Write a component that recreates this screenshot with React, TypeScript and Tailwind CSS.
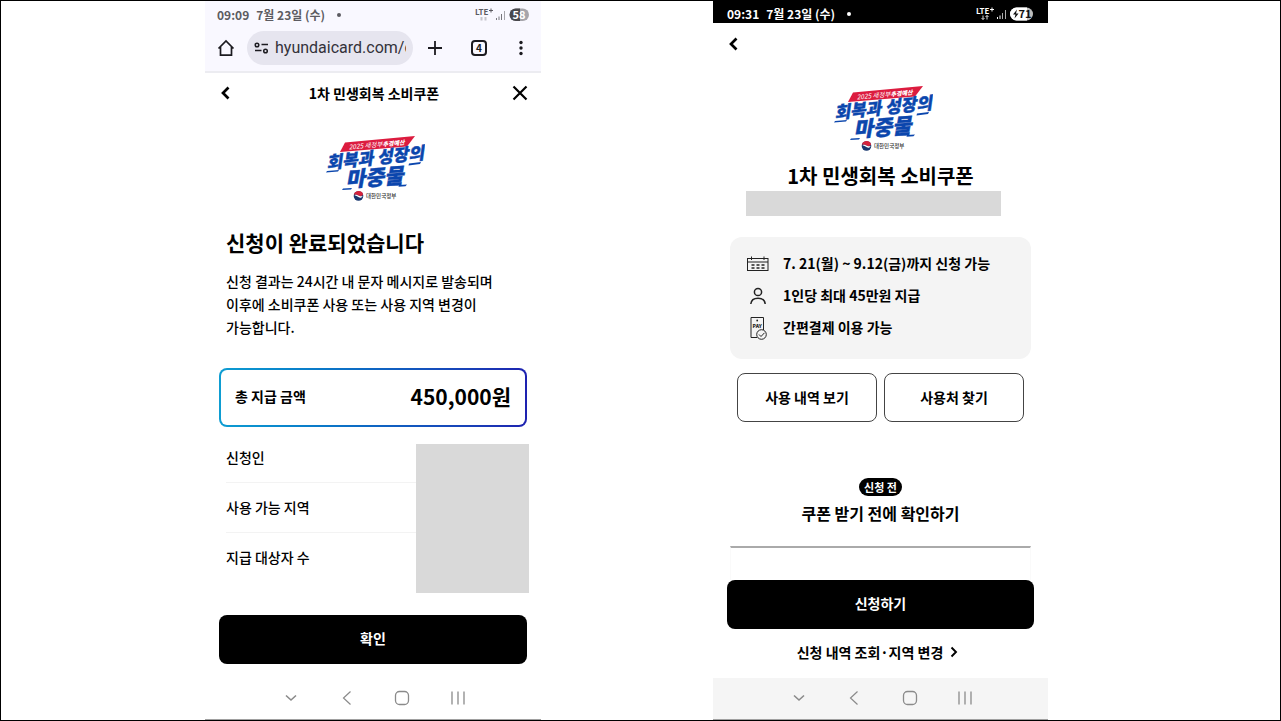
import clsx from "clsx";

type StatusBarProps = {
  time: string;
  date: string;
  level: string;
  dark?: boolean;
};

const StatusBar: React.FC<StatusBarProps> = ({ time, date, level, dark }) => {
  return (
    <div
      className={clsx(
        "flex items-center justify-between text-xs leading-4 font-bold",
        dark
          ? "bg-black pt-[5px] pb-px pl-[14px] pr-[14px] text-white"
          : "bg-[#f9f8ff] pt-[6px] pb-[6px] pl-3 pr-3 text-[#5c5b61]"
      )}
    >
      <div className="flex items-center">
        <span>{time}</span>
        <span className="ml-[7px]">{date}</span>
        <span
          className={clsx(
            "ml-3 size-1 rounded-full",
            dark ? "bg-white" : "bg-[#5c5b61]"
          )}
        />
      </div>
      {dark ? (
        <svg width="58" height="16" viewBox="0 0 58 16" aria-label={level}>
          <text x="0" y="8" fontSize="8" fontWeight="700" fill="#fff">
            LTE
          </text>
          <path d="M14 3.500h4M16 1.500v4" stroke="#fff" />
          <path d="M7 9.500v4M5.500 12l1.500 1.500L8.500 12M11 13.500v-4M9.500 11L11 9.500l1.500 1.500" fill="none" stroke="#ddd" />
          <path d="M21.500 13v-2M24 13V9.500" stroke="#fff" />
          <path d="M26.500 13V7M29.500 13V4" stroke="#aaa" />
          <rect x="34" y="1.500" width="23" height="13" rx="6.500" fill="#bdbdbd" />
          <path d="M40.500 1.500H51v13H40.500a6.500 6.500 0 0 1 0-13z" fill="#fff" />
          <path d="M41 3.500l-4 5h2.500l-1 4 4-5H40z" fill="#111" />
          <text x="42.500" y="12" fontSize="11" fontWeight="700" fill="#111">
            {level}
          </text>
        </svg>
      ) : (
        <svg width="54" height="16" viewBox="0 0 54 16" aria-label={level}>
          <text x="0" y="8" fontSize="8" fontWeight="700" fill="#5c5b61">
            LTE
          </text>
          <path d="M14 3.500h4M16 1.500v4" stroke="#5c5b61" />
          <path d="M6.500 10v3.500M10.500 10v3.500" stroke="#c5c4cc" strokeWidth="2" />
          <path d="M21.500 13v-2M24 13V9.500M26.500 13V7" stroke="#77767c" />
          <path d="M29.500 13V4" stroke="#a5a4aa" />
          <rect x="34.500" y="1.500" width="19.500" height="12.500" rx="6.250" fill="#a6a5ab" />
          <path d="M45 1.500v12.500h-4.250a6.250 6.250 0 0 1 0-12.500z" fill="#48474c" />
          <text x="37.500" y="12" fontSize="11" fontWeight="700" fill="#fff">
            {level}
          </text>
        </svg>
      )}
    </div>
  );
};

const CampaignLogo: React.FC = () => {
  return (
    <svg
      className="mx-auto block"
      width="104"
      height="70"
      viewBox="0 0 104 70"
      role="img"
      aria-label="2025 새정부 추경예산 회복과 성장의 마중물"
    >
      <path d="M24 9.500L94 3l-8 10.500-67 5.500z" fill="#dc1c3f" />
      <g transform="rotate(-5 28 17)" fill="#fff" fontStyle="italic">
        <text x="28" y="16.500" fontSize="6.500">
          2025 새정부
        </text>
        <text x="62" y="16.500" fontSize="6" fontWeight="900">
          추경예산
        </text>
      </g>
      <g fill="#0b46ad" stroke="#0b46ad" strokeWidth="0.400" fontStyle="italic" fontWeight="900">
        <text x="6" y="36" fontSize="17" transform="rotate(-6 6 36)">
          회복과 성장의
        </text>
        <text x="25" y="54" fontSize="21" transform="rotate(-4 25 54)">
          마중물
        </text>
      </g>
      <path d="M6 38l12-1-1 1.500-12 1zM88 30.500l12-1.500-1 2-11.500 1.500zM22 55.500l9-.6-1 1.600-9 .6zM78 52l8-.6-1.500 1.800-7 .5z" fill="#0b46ad" />
      <circle cx="37.500" cy="63" r="4.800" fill="#17366e" />
      <path d="M32.800 62a4.800 4.800 0 0 1 9.300-.8c-1.200 2.400-3.600 2.200-4.600 1.400-1.500-1.200-3.700-1.300-4.700-.6z" fill="#d5233c" />
      <path d="M33.500 62.200c1.300-.8 2.800-.5 3.800.3 1.300 1 3 1 4.300.2-.5 2-2.300 2.500-3.800 1.600-1.500-1-3-1.700-4.300-2.100z" fill="#fff" />
      <text x="45" y="65" fontSize="5.500" fontWeight="500" fill="#333">
        대한민국정부
      </text>
    </svg>
  );
};

const BackIcon: React.FC = () => (
  <svg width="10" height="14" viewBox="0 0 10 14" fill="none">
    <path d="M8.500 1.500L3 7l5.500 5.500" stroke="#000" strokeWidth="2.700" />
  </svg>
);

const SystemNav: React.FC<{ className?: string }> = ({ className }) => {
  return (
    <nav
      className={clsx(
        "mt-auto flex h-[42px] items-center justify-between border-b border-[#a0a0a0] pb-px pl-[76px] pr-[73px]",
        className
      )}
    >
      <button type="button" aria-label="키보드 닫기">
        <svg width="20" height="20" viewBox="0 0 20 20" fill="none" stroke="#8a8a8a" strokeWidth="1.600">
          <path d="M5 7.500l5 4.500 5-4.500" />
        </svg>
      </button>
      <button type="button" aria-label="뒤로">
        <svg width="20" height="20" viewBox="0 0 20 20" fill="none" stroke="#8a8a8a" strokeWidth="1.200">
          <path d="M13.500 3.500L6.500 10l7 6.500" />
        </svg>
      </button>
      <button type="button" aria-label="홈">
        <svg width="20" height="20" viewBox="0 0 20 20" fill="none" stroke="#8a8a8a" strokeWidth="1.300">
          <rect x="3.500" y="3.500" width="13" height="13" rx="4" />
        </svg>
      </button>
      <button type="button" aria-label="최근 앱">
        <svg width="20" height="20" viewBox="0 0 20 20" fill="none" stroke="#8a8a8a" strokeWidth="1.300">
          <path d="M4 3.500v13M10 3.500v13M16 3.500v13" />
        </svg>
      </button>
    </nav>
  );
};

const BrowserToolbar: React.FC = () => {
  return (
    <div className="flex items-center border-b-2 border-[#ececf1] bg-[#f9f8ff] pt-[2px] pb-[6px] text-[#1c1b20]">
      <button type="button" aria-label="홈페이지" className="flex w-[42px] justify-center">
        <svg width="18" height="18" viewBox="0 0 18 18" fill="none" stroke="currentColor" strokeWidth="1.700">
          <path d="M1.500 9.500L9 2l7.500 7.500M3.500 8v8.200h11V8" />
        </svg>
      </button>
      <label className="flex h-[34px] min-w-0 flex-1 items-center gap-[6px] rounded-full bg-[#e6e5ef] pr-[7px] pl-[7px]">
        <svg className="shrink-0" width="15" height="14" viewBox="0 0 15 14" fill="none" stroke="currentColor" strokeWidth="1.500">
          <circle cx="3" cy="4" r="1.800" />
          <path d="M7.500 3.500H14M1 9.500h6.500" />
          <circle cx="11.500" cy="10" r="1.800" />
        </svg>
        <input
          type="text"
          readOnly
          aria-label="주소"
          value="hyundaicard.com/c"
          className="w-full min-w-0 bg-transparent font-[Roboto,'Noto_Sans_CJK_KR',sans-serif] text-base leading-6 text-[#33323a] outline-none"
        />
      </label>
      <button type="button" aria-label="새 탭" className="flex w-11 justify-center">
        <svg width="16" height="16" viewBox="0 0 16 16" stroke="currentColor" strokeWidth="1.800">
          <path d="M8 1v14M1 8h14" />
        </svg>
      </button>
      <button type="button" aria-label="탭 목록" className="flex w-11 justify-center">
        <span className="flex size-4 items-center justify-center rounded-[4px] border-2 border-[#1c1b20] text-[10px] leading-3 font-bold">
          4
        </span>
      </button>
      <button type="button" aria-label="더보기" className="flex w-10 justify-center">
        <svg width="4" height="16" viewBox="0 0 4 16" fill="currentColor">
          <circle cx="2" cy="2.500" r="1.700" />
          <circle cx="2" cy="8" r="1.700" />
          <circle cx="2" cy="13.500" r="1.700" />
        </svg>
      </button>
    </div>
  );
};

const resultRows = ["신청인", "사용 가능 지역", "지급 대상자 수"];

const CompletePhone: React.FC = () => {
  return (
    <section className="col-start-2 flex min-w-0 flex-col">
      <StatusBar time="09:09" date="7월 23일 (수)" level="58" />
      <BrowserToolbar />

      <header className="flex h-10 items-center justify-between pr-[13px] pl-[15px]">
        <button type="button" aria-label="이전" className="w-4">
          <BackIcon />
        </button>
        <h2 className="pb-px text-sm font-bold">1차 민생회복 소비쿠폰</h2>
        <button type="button" aria-label="닫기">
          <svg width="16" height="16" viewBox="0 0 16 16" stroke="#000" strokeWidth="2.200">
            <path d="M1.500 1.500l13 13M14.500 1.500l-13 13" />
          </svg>
        </button>
      </header>

      <div className="pt-5">
        <CampaignLogo />
      </div>

      <div className="px-[21px] pt-6">
        <h1 className="text-[21px] leading-[30px] font-bold">신청이 완료되었습니다</h1>
        <p className="mt-[13px] text-sm leading-[23px] font-medium">
          신청 결과는 24시간 내 문자 메시지로 발송되며
          <br />
          이후에 소비쿠폰 사용 또는 사용 지역 변경이
          <br />
          가능합니다.
        </p>
      </div>

      <div className="mx-[14px] mt-[29px] rounded-lg bg-linear-to-r from-[#0e9dd2] to-[#1e22b0] p-[2px]">
        <div className="flex h-[55px] items-center justify-between rounded-md bg-white px-[14px] pb-1">
          <span className="text-sm font-bold">총 지급 금액</span>
          <strong className="text-[21px] leading-[30px] font-bold">450,000원</strong>
        </div>
      </div>

      <div className="mt-[6px] flex items-start pr-3 pl-[21px]">
        <ul className="flex-1 divide-y divide-[#f3f3f3] text-sm font-medium">
          {resultRows.map((row) => (
            <li key={row} className="flex h-[50px] items-center pb-[2px]">
              {row}
            </li>
          ))}
        </ul>
        <div className="mt-[11px] h-[149px] w-[113px] bg-[#d9d9d9]" />
      </div>

      <button
        type="button"
        className="mx-[14px] mt-[22px] h-[49px] rounded-lg bg-black pb-[3px] text-sm font-bold text-white"
      >
        확인
      </button>

      <SystemNav />
    </section>
  );
};

const CalendarIcon: React.FC = () => (
  <svg width="22" height="16" viewBox="0 0 22 16" fill="none" stroke="#222">
    <rect x="0.500" y="2.500" width="20.500" height="12" />
    <path d="M0.500 6H21M4.500 0.500v3.500M17 0.500v3.500" />
    <path d="M4.500 9h13M4.500 12h13" strokeWidth="1.400" strokeDasharray="3 2" />
  </svg>
);

const PersonIcon: React.FC = () => (
  <svg width="18" height="18" viewBox="0 0 18 18" fill="none" stroke="#222" strokeWidth="1.500">
    <circle cx="9" cy="5" r="3.600" />
    <path d="M1.800 17c.4-4 3.200-5.800 7.200-5.800s6.800 1.800 7.200 5.800" />
  </svg>
);

const PayIcon: React.FC = () => (
  <svg width="18" height="24" viewBox="0 0 18 24" fill="none" stroke="#222">
    <path d="M8 21.500H2V1.500h12.500V14" />
    <circle cx="8.200" cy="4.500" r="0.900" fill="#222" stroke="none" />
    <text x="3.500" y="12" fontSize="5" fontWeight="900" fill="#222" stroke="none">
      PAY
    </text>
    <circle cx="12.500" cy="18.500" r="4.800" fill="#f4f4f4" />
    <path d="M10 18.500l2 2 3.500-3.700" />
  </svg>
);

const couponInfo = [
  { icon: <CalendarIcon />, text: "7. 21(월) ~ 9.12(금)까지 신청 가능" },
  { icon: <PersonIcon />, text: "1인당 최대 45만원 지급" },
  { icon: <PayIcon />, text: "간편결제 이용 가능" },
];

const ApplyPhone: React.FC = () => {
  return (
    <section className="col-start-4 flex min-w-0 flex-col">
      <StatusBar time="09:31" date="7월 23일 (수)" level="71" dark />

      <header className="flex h-[42px] items-center pl-[15px]">
        <button type="button" aria-label="이전">
          <BackIcon />
        </button>
      </header>

      <div className="pt-[18px]">
        <CampaignLogo />
      </div>

      <h1 className="mt-2 text-center text-xl leading-[30px] font-bold">1차 민생회복 소비쿠폰</h1>
      <div className="mr-[47px] ml-[33px] h-[25px] bg-[#d9d9d9]" />

      <ul className="mx-[17px] mt-[21px] flex h-[122px] flex-col rounded-xl bg-[#f4f4f4] pt-[11px] text-sm font-bold">
        {couponInfo.map((item) => (
          <li key={item.text} className="flex h-8 items-center">
            <span className="ml-[17px] flex w-[22px] justify-center">{item.icon}</span>
            <span className="ml-[14px] pb-[2px]">{item.text}</span>
          </li>
        ))}
      </ul>

      <div className="mt-[14px] grid grid-cols-2 gap-[7px] pr-6 pl-6 text-sm font-bold">
        <button type="button" className="h-[49px] rounded-lg border border-[#444] pb-px">
          사용 내역 보기
        </button>
        <button type="button" className="h-[49px] rounded-lg border border-[#444] pb-px">
          사용처 찾기
        </button>
      </div>

      <div className="mt-14 flex flex-col items-center">
        <span className="rounded-full bg-black px-[5px] text-[11px] leading-[18px] font-bold text-white">
          신청 전
        </span>
        <h2 className="mt-[5px] text-base leading-6 font-bold">쿠폰 받기 전에 확인하기</h2>
      </div>

      <div className="mx-[17px] mt-[21px] h-[34px] border-x border-t-2 border-x-[#fafafa] border-t-[#aaa]" />

      <button
        type="button"
        className="mx-[14px] h-[49px] rounded-lg bg-black pb-[3px] text-sm font-bold text-white"
      >
        신청하기
      </button>
      <a
        href="#history"
        className="mt-[13px] mb-[15px] flex items-center justify-center gap-[7px] pr-[6px] text-sm leading-5 font-bold"
      >
        신청 내역 조회·지역 변경
        <svg width="8" height="12" viewBox="0 0 8 12" fill="none" stroke="#000" strokeWidth="1.900">
          <path d="M1.500 1.500L6 6l-4.500 4.500" />
        </svg>
      </a>

      <SystemNav className="bg-[#f5f5f5]" />
    </section>
  );
};

const App: React.FC = () => {
  return (
    <main className="grid min-h-screen grid-cols-[204fr_336fr_172fr_335fr_232fr] border border-black bg-white font-['Noto_Sans_CJK_KR',sans-serif] text-black">
      <CompletePhone />
      <ApplyPhone />
    </main>
  );
};

export default App;
